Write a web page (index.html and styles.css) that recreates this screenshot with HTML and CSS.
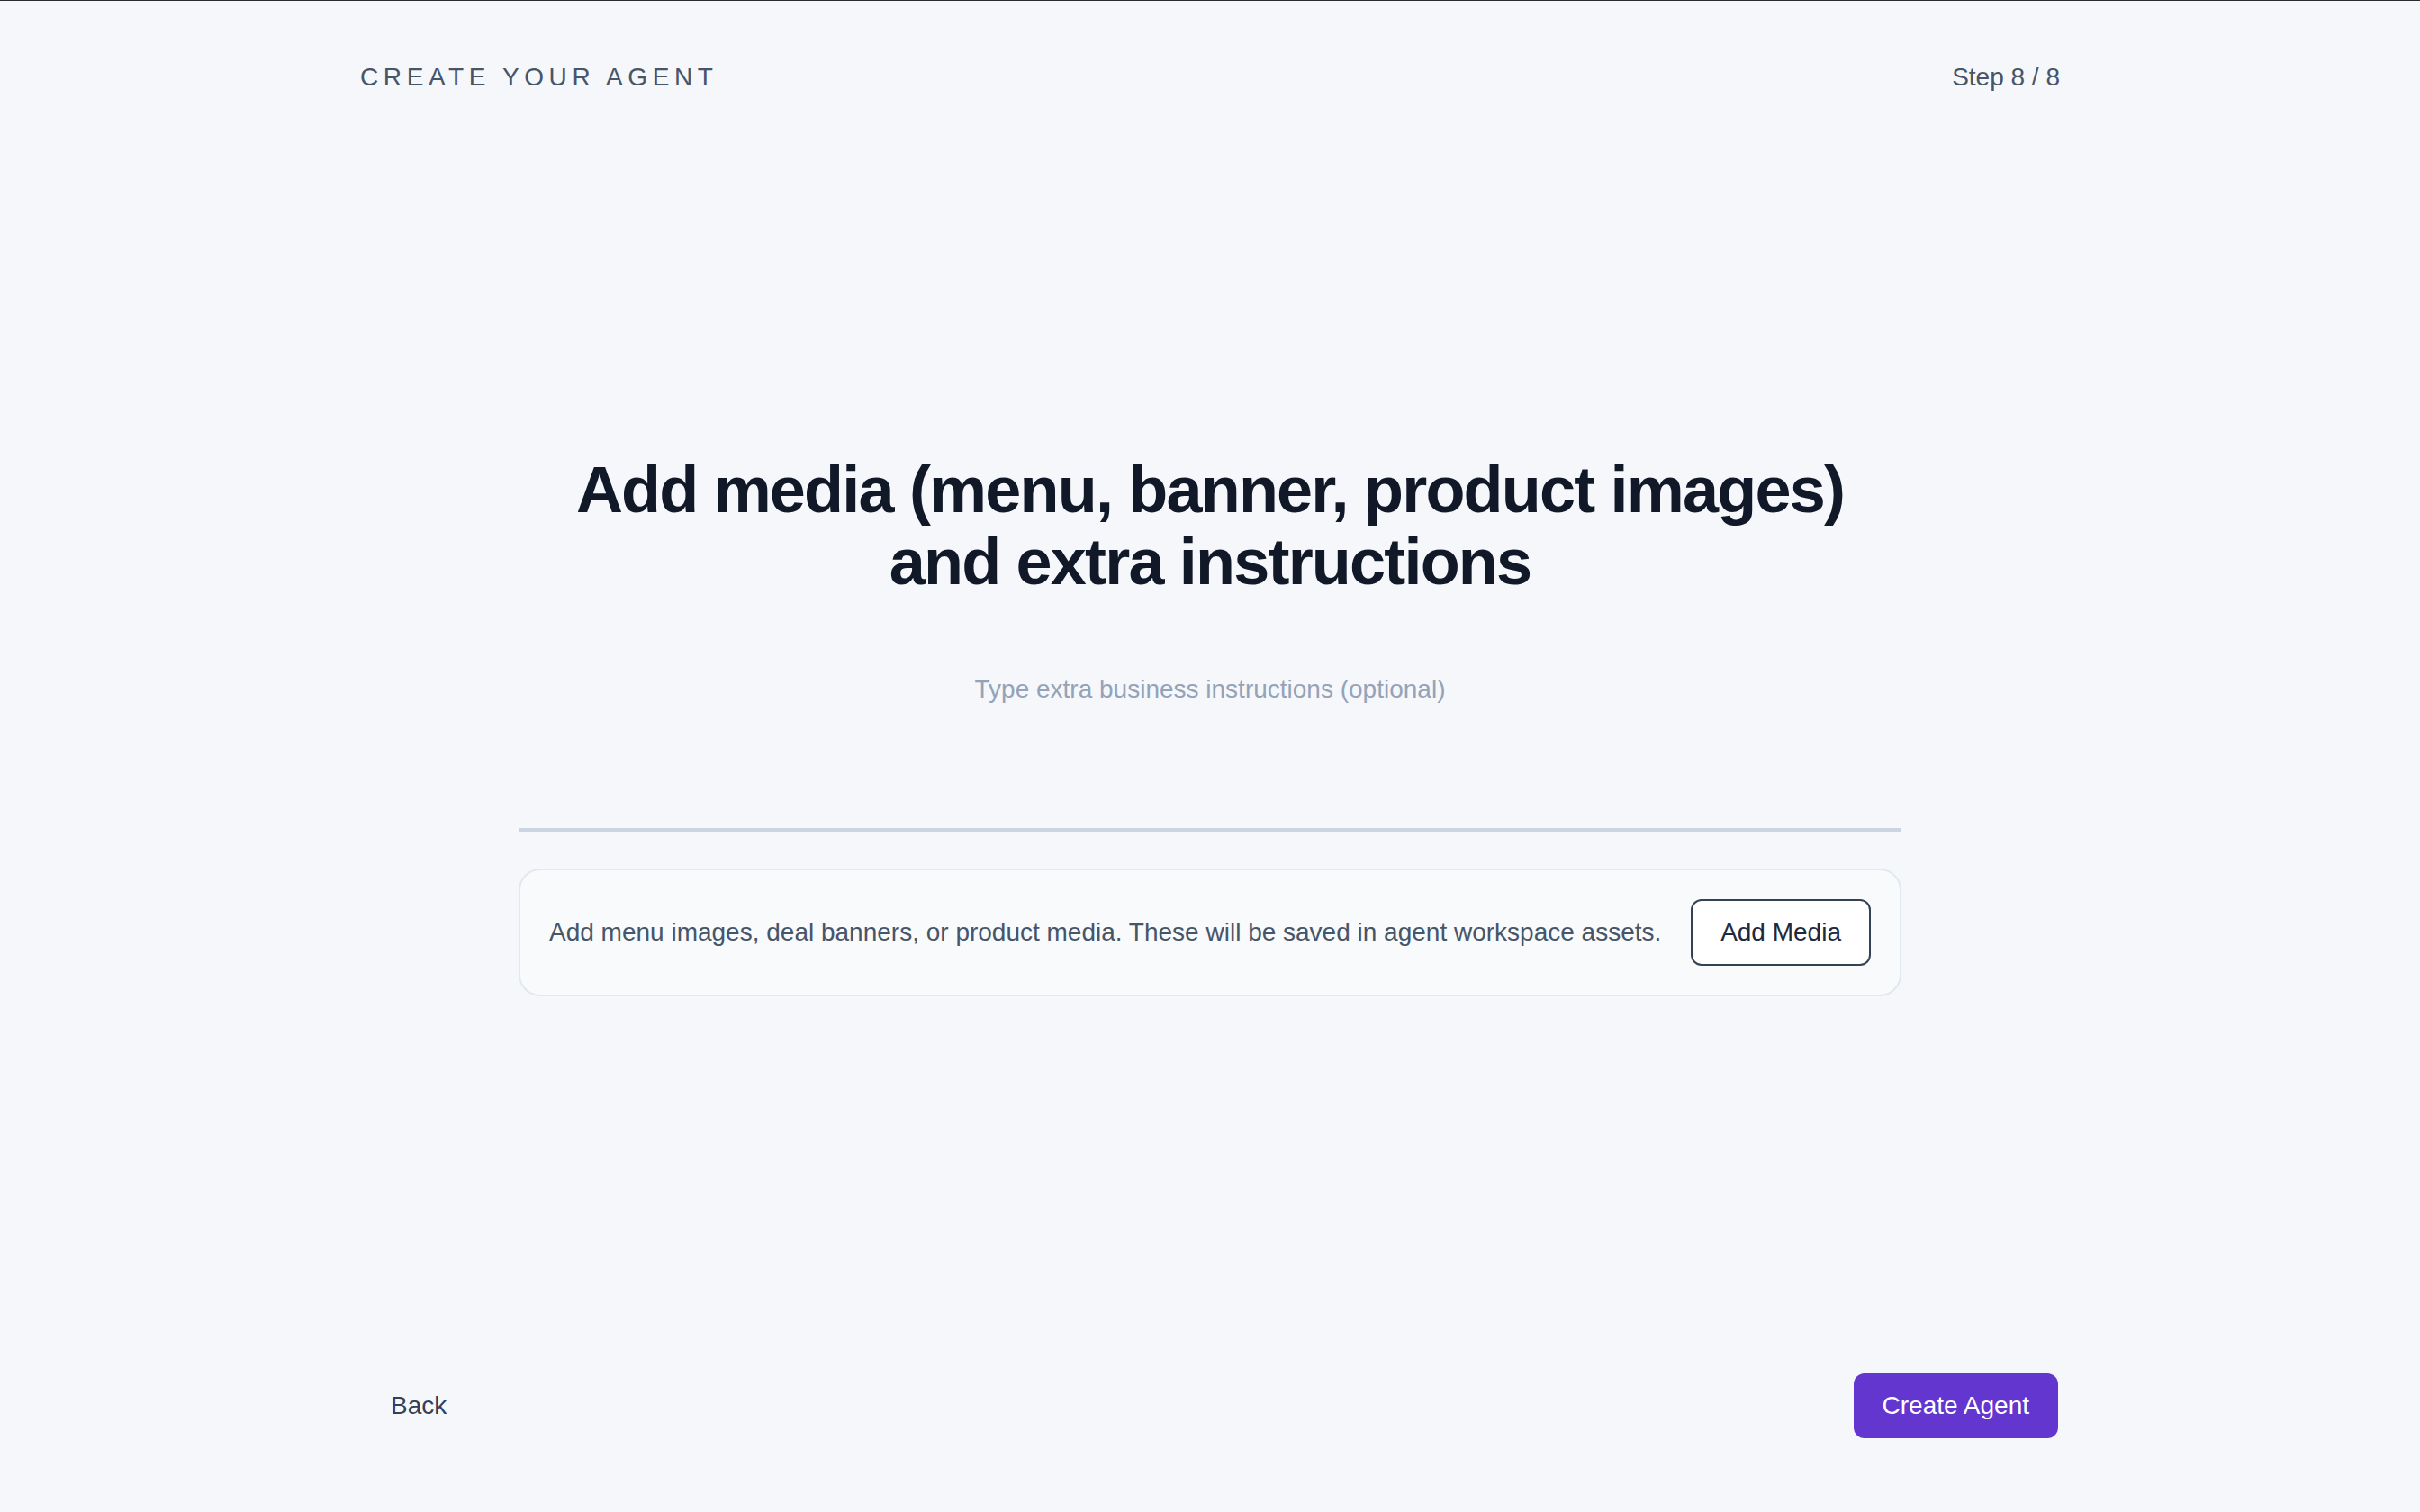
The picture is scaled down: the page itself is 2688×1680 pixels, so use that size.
FILE: index.html
```html
<!DOCTYPE html>
<html lang="en">
<head>
<meta charset="utf-8">
<title>Create your agent</title>
<link rel="stylesheet" href="styles.css">
</head>
<body>
<div class="page">
  <header class="topbar">
    <span class="eyebrow">CREATE YOUR AGENT</span>
    <span class="step">Step 8 / 8</span>
  </header>
  <main class="content">
    <h1 class="title">Add media (menu, banner, product images)<br>and extra instructions</h1>
    <textarea class="instructions" placeholder="Type extra business instructions (optional)"></textarea>
    <div class="media-card">
      <p class="media-text">Add menu images, deal banners, or product media. These will be saved in agent workspace assets.</p>
      <button class="btn-outline" type="button">Add Media</button>
    </div>
  </main>
  <footer class="footer">
    <button class="btn-ghost" type="button">Back</button>
    <button class="btn-primary" type="button">Create Agent</button>
  </footer>
</div>
</body>
</html>
```
FILE: styles.css
```css
* { box-sizing: border-box; }
html, body { margin: 0; padding: 0; }
body {
  background: #f5f7fb;
  border-top: 1px solid #2b2b2b;
  font-family: "Liberation Sans", Arial, Helvetica, sans-serif;
  color: #0f172a;
  min-height: 100vh;
}
.page {
  width: 1888px;
  margin: 0 auto;
  min-height: 1679px;
  display: flex;
  flex-direction: column;
}
.topbar {
  display: flex;
  justify-content: space-between;
  align-items: center;
  padding-top: 65px;
  height: 105px;
}
.eyebrow {
  font-size: 28px;
  line-height: 40px;
  letter-spacing: 5.6px;
  color: #475569;
}
.step {
  font-size: 28px;
  line-height: 40px;
  color: #475569;
}
.content {
  flex: 1;
  display: flex;
  flex-direction: column;
  align-items: center;
  padding-top: 398px;
}
.title {
  margin: 0;
  font-size: 72px;
  line-height: 80px;
  font-weight: 700;
  letter-spacing: -1.8px;
  text-align: center;
  color: #111827;
}
.instructions {
  display: block;
  width: 1536px;
  height: 260px;
  margin-top: 0;
  padding: 82px 0 0;
  border: none;
  border-bottom: 4px solid #cbd5e1;
  background: transparent;
  resize: none;
  outline: none;
  font-family: "Liberation Sans", Arial, Helvetica, sans-serif;
  font-size: 28px;
  line-height: 40px;
  text-align: center;
  color: #0f172a;
}
.instructions::placeholder { color: #94a3b8; opacity: 1; }
.media-card {
  width: 1536px;
  margin-top: 41px;
  display: flex;
  align-items: center;
  gap: 32px;
  padding: 32px 32px;
  border: 2px solid #e2e8f0;
  border-radius: 24px;
  background: #f8fafc;
}
.media-text {
  margin: 0;
  flex: 1;
  font-size: 28px;
  line-height: 40px;
  color: #475569;
}
.btn-outline {
  font-family: "Liberation Sans", Arial, Helvetica, sans-serif;
  font-size: 28px;
  line-height: 40px;
  padding: 15px 31px;
  border: 2px solid #334155;
  border-radius: 12px;
  background: #ffffff;
  color: #1e293b;
  cursor: pointer;
}
.footer {
  display: flex;
  justify-content: space-between;
  align-items: center;
  padding-bottom: 80px;
}
.btn-ghost {
  font-family: "Liberation Sans", Arial, Helvetica, sans-serif;
  font-size: 28px;
  line-height: 40px;
  padding: 16px 32px;
  border: 2px solid transparent;
  border-radius: 12px;
  background: transparent;
  color: #334155;
  cursor: pointer;
}
.btn-primary {
  font-family: "Liberation Sans", Arial, Helvetica, sans-serif;
  font-size: 28px;
  line-height: 40px;
  padding: 16px 32px;
  margin-right: 2px;
  border: none;
  border-radius: 12px;
  background: #6236cf;
  color: #ffffff;
  cursor: pointer;
}
```
